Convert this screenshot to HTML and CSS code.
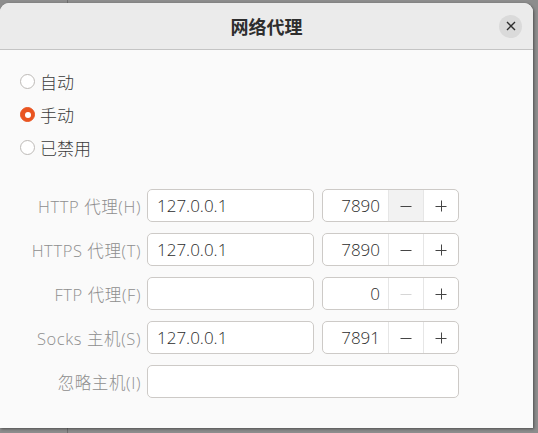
FILE: index.html
```html
<!DOCTYPE html>
<html lang="zh-CN">
<head>
<meta charset="utf-8">
<title>网络代理</title>
<link rel="stylesheet" href="styles.css">
</head>
<body>
<div class="dialog">
  <header class="header">
    <div class="spacer"></div>
    <div class="title">网络代理</div>
    <div class="actions">
      <button class="close" aria-label="关闭">
        <svg width="10" height="10" viewBox="0 0 10 10"><path d="M1 1L9 9M9 1L1 9" stroke="#2e2e2e" stroke-width="1.4" fill="none"/></svg>
      </button>
    </div>
  </header>
  <main class="content">
    <div class="modes">
      <label class="radio-row"><span class="radio"></span><span class="radio-text">自动</span></label>
      <label class="radio-row"><span class="radio checked"></span><span class="radio-text">手动</span></label>
      <label class="radio-row"><span class="radio"></span><span class="radio-text">已禁用</span></label>
    </div>
    <div class="form">
      <div class="row">
        <span class="label">HTTP 代理(H)</span>
        <div class="entry">127.0.0.1</div>
        <div class="spin">
          <div class="spin-value">7890</div>
          <div class="spin-btn hover"><svg width="12" height="12" viewBox="0 0 12 12"><path d="M0.5 6.5H11.5" stroke="#454545" stroke-width="1"/></svg></div>
          <div class="spin-btn"><svg width="12" height="12" viewBox="0 0 12 12"><path d="M0.5 6.5H11.5M6.5 0.5V11.5" stroke="#454545" stroke-width="1"/></svg></div>
        </div>
      </div>
      <div class="row">
        <span class="label">HTTPS 代理(T)</span>
        <div class="entry">127.0.0.1</div>
        <div class="spin">
          <div class="spin-value">7890</div>
          <div class="spin-btn"><svg width="12" height="12" viewBox="0 0 12 12"><path d="M0.5 6.5H11.5" stroke="#454545" stroke-width="1"/></svg></div>
          <div class="spin-btn"><svg width="12" height="12" viewBox="0 0 12 12"><path d="M0.5 6.5H11.5M6.5 0.5V11.5" stroke="#454545" stroke-width="1"/></svg></div>
        </div>
      </div>
      <div class="row">
        <span class="label">FTP 代理(F)</span>
        <div class="entry"></div>
        <div class="spin">
          <div class="spin-value">0</div>
          <div class="spin-btn"><svg width="12" height="12" viewBox="0 0 12 12"><path d="M0.5 6.5H11.5" stroke="#d6d6d6" stroke-width="1"/></svg></div>
          <div class="spin-btn"><svg width="12" height="12" viewBox="0 0 12 12"><path d="M0.5 6.5H11.5M6.5 0.5V11.5" stroke="#454545" stroke-width="1"/></svg></div>
        </div>
      </div>
      <div class="row">
        <span class="label">Socks 主机(S)</span>
        <div class="entry">127.0.0.1</div>
        <div class="spin">
          <div class="spin-value">7891</div>
          <div class="spin-btn"><svg width="12" height="12" viewBox="0 0 12 12"><path d="M0.5 6.5H11.5" stroke="#454545" stroke-width="1"/></svg></div>
          <div class="spin-btn"><svg width="12" height="12" viewBox="0 0 12 12"><path d="M0.5 6.5H11.5M6.5 0.5V11.5" stroke="#454545" stroke-width="1"/></svg></div>
        </div>
      </div>
      <div class="row">
        <span class="label">忽略主机(I)</span>
        <div class="entry wide"></div>
      </div>
    </div>
  </main>
</div>
</body>
</html>
```
FILE: styles.css
```css
* { box-sizing: border-box; }
html, body { height: 100%; }
body {
  margin: 0;
  background:
    linear-gradient(to right, transparent 67px, #6f6f6f 67px, #6f6f6f 68px, transparent 68px),
    #8d8d8d;
  font-family: "Open Sans", "Noto Sans CJK SC", sans-serif;
  font-weight: 300;
  overflow: hidden;
}
.dialog {
  margin-top: 3px;
  width: 533px;
  height: 425px;
  background: #fafafa;
  border-radius: 9px 9px 0 0;
  box-shadow: 1px 1px 3px rgba(0,0,0,0.45);
  overflow: hidden;
  display: flex;
  flex-direction: column;
}
.header {
  height: 47px;
  flex: none;
  background: #ebebeb;
  border-bottom: 1px solid #c4c4c4;
  display: grid;
  grid-template-columns: 1fr auto 1fr;
  align-items: center;
}
.title {
  font-family: "Noto Sans CJK SC", sans-serif;
  font-weight: 700;
  font-size: 18px;
  color: #2e2e2e;
  padding-bottom: 1px;
}
.actions {
  display: flex;
  justify-content: flex-end;
  padding-right: 11px;
}
.close {
  width: 23px;
  height: 23px;
  border-radius: 50%;
  border: none;
  padding: 0;
  background: #dadada;
  display: flex;
  align-items: center;
  justify-content: center;
}
.content {
  padding: 15px 0 0 20px;
}
.modes {
  display: flex;
  flex-direction: column;
}
.radio-row {
  height: 33px;
  display: flex;
  align-items: center;
  gap: 5px;
}
.radio {
  width: 15px;
  height: 15px;
  border-radius: 50%;
  border: 1px solid #bdbab7;
  background: #fff;
  display: flex;
  align-items: center;
  justify-content: center;
}
.radio.checked {
  background: #e95420;
  border-color: #e95420;
}
.radio.checked::after {
  content: "";
  width: 6px;
  height: 6px;
  border-radius: 50%;
  background: #fff;
}
.radio-text {
  font-family: "Noto Sans CJK SC", sans-serif;
  font-weight: 300;
  font-size: 17px;
  color: #3a3a3a;
  line-height: 1;
}
.form {
  margin-top: 25px;
  display: flex;
  flex-direction: column;
  gap: 11px;
}
.row {
  display: flex;
  align-items: center;
  height: 33px;
}
.label {
  width: 121px;
  margin-right: 6px;
  text-align: right;
  font-size: 16.5px;
  color: #8e8e8e;
  white-space: nowrap;
  letter-spacing: 0.6px;
}
.entry {
  width: 167px;
  height: 33px;
  margin-right: 8px;
  background: #fff;
  border: 1px solid #cdcac7;
  border-radius: 5px;
  padding-left: 9px;
  font-size: 17px;
  color: #2c2c2c;
  display: flex;
  align-items: center;
}
.entry.wide {
  width: 312px;
  margin-right: 0;
}
.spin {
  width: 137px;
  height: 33px;
  background: #fff;
  border: 1px solid #cdcac7;
  border-radius: 5px;
  display: flex;
  overflow: hidden;
}
.spin-value {
  flex: 1;
  text-align: right;
  padding-right: 8px;
  font-size: 17px;
  color: #2c2c2c;
  display: flex;
  align-items: center;
  justify-content: flex-end;
}
.spin-btn {
  width: 35px;
  border-left: 1px solid #e6e6e6;
  display: flex;
  align-items: center;
  justify-content: center;
}
.spin-btn.hover { background: #f2f2f2; }
```
